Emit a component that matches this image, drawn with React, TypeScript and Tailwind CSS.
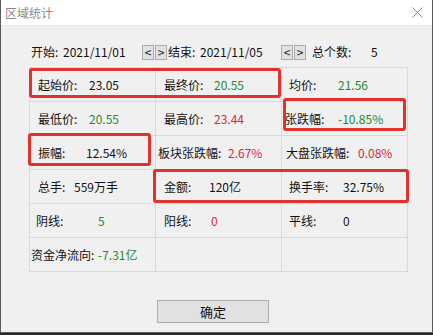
import React from "react";

type Cell = {
  label: string;
  value?: string;
  color?: string;
  pad: string;
  lw: string;
};

const GREEN = "text-[#24892f]";
const RED = "text-[#d9253c]";
const BLACK = "text-[#111]";

const rows: Cell[][] = [
  [
    { label: "起始价:", value: "23.05", color: BLACK, pad: "pl-[8px]", lw: "w-[51px]" },
    { label: "最终价:", value: "20.55", color: GREEN, pad: "pl-[8px]", lw: "w-[50px]" },
    { label: "均价:", value: "21.56", color: GREEN, pad: "pl-[7px]", lw: "w-[49px]" },
  ],
  [
    { label: "最低价:", value: "20.55", color: GREEN, pad: "pl-[8px]", lw: "w-[51px]" },
    { label: "最高价:", value: "23.44", color: RED, pad: "pl-[8px]", lw: "w-[50px]" },
    { label: "张跌幅:", value: "-10.85%", color: GREEN, pad: "pl-[3px]", lw: "w-[53px]" },
  ],
  [
    { label: "振幅:", value: "12.54%", color: BLACK, pad: "pl-[8px]", lw: "w-[48px]" },
    { label: "板块张跌幅:", value: "2.67%", color: RED, pad: "pl-[2px]", lw: "w-[70px]" },
    { label: "大盘张跌幅:", value: "0.08%", color: RED, pad: "pl-[4px]", lw: "w-[72px]" },
  ],
  [
    { label: "总手:", value: "559万手", color: BLACK, pad: "pl-[8px]", lw: "w-[36px]" },
    { label: "金额:", value: "120亿", color: BLACK, pad: "pl-[8px]", lw: "w-[45px]" },
    { label: "换手率:", value: "32.75%", color: BLACK, pad: "pl-[7px]", lw: "w-[54px]" },
  ],
  [
    { label: "阴线:", value: "5", color: GREEN, pad: "pl-[6px]", lw: "w-[62px]" },
    { label: "阳线:", value: "0", color: RED, pad: "pl-[8px]", lw: "w-[47px]" },
    { label: "平线:", value: "0", color: BLACK, pad: "pl-[7px]", lw: "w-[54px]" },
  ],
  [
    { label: "资金净流向:", value: "-7.31亿", color: GREEN, pad: "pl-[1px]", lw: "w-[67px]" },
    { label: "", pad: "", lw: "" },
    { label: "", pad: "", lw: "" },
  ],
];

function ArrowPair() {
  return (
    <div className="flex gap-[1px]">
      <button className="flex h-[15px] w-[12px] items-center justify-center border border-[#adadad] bg-[#e1e1e1] text-[12px] leading-none text-[#222]">
        &lt;
      </button>
      <button className="flex h-[15px] w-[12px] items-center justify-center border border-[#adadad] bg-[#e1e1e1] text-[12px] leading-none text-[#222]">
        &gt;
      </button>
    </div>
  );
}

export default function App() {
  return (
    <div
      className="h-[335px] w-[433px] bg-[#2a2a2a] text-[12px] text-[#111]"
      style={{ fontFamily: '"Noto Sans CJK SC", "Noto Sans", sans-serif' }}
    >
      <div className="flex h-[333px] w-[433px] flex-col border-x border-b border-[#5a5a5a] bg-[#f0f0f0]">
        {/* title bar */}
        <div className="flex h-[26px] items-center justify-between border-b border-[#e6e6e6] bg-white pl-[4px] pr-[9px]">
          <span className="text-[12px] text-[#8a8a8a]">区域统计</span>
          <svg width="11" height="11" viewBox="0 0 11 11" className="mb-[1px]">
            <path d="M0.5 0.5 L10.5 10.5 M10.5 0.5 L0.5 10.5" stroke="#8c8c8c" strokeWidth="1" />
          </svg>
        </div>

        {/* header */}
        <div className="mt-[18px] flex h-[16px] items-center pl-[30px] leading-none">
          <span className="w-[32px]">开始:</span>
          <span className="w-[79px]">2021/11/01</span>
          <ArrowPair />
          <span className="w-[33px] pl-[1px]">结束:</span>
          <span className="w-[81px]">2021/11/05</span>
          <ArrowPair />
          <span className="ml-[6px] w-[59px]">总个数:</span>
          <span>5</span>
        </div>

        {/* grid */}
        <div className="relative ml-[28px] mt-[7px] w-[379px]">
          <div className="grid grid-cols-3 border-l border-t border-[#d9d9d9]">
            {rows.flat().map((c, i) => (
              <div
                key={i}
                className={`flex h-[34px] items-center border-b border-r border-[#d9d9d9] leading-none ${c.pad}`}
              >
                <span className={c.lw}>{c.label}</span>
                {c.value && <span className={c.color}>{c.value}</span>}
              </div>
            ))}
          </div>

          {/* highlight boxes */}
          <div className="pointer-events-none absolute left-[0px] top-[1px] h-[30px] w-[252px] rounded-[3px] border-[3px] border-[#e0312c]" />
          <div className="pointer-events-none absolute left-[254px] top-[31px] h-[33px] w-[123px] rounded-[3px] border-[3px] border-[#e0312c]" />
          <div className="pointer-events-none absolute left-[-1px] top-[66px] h-[33px] w-[123px] rounded-[3px] border-[3px] border-[#e0312c]" />
          <div className="pointer-events-none absolute left-[124px] top-[102px] h-[34px] w-[256px] rounded-[3px] border-[3px] border-[#e0312c]" />
        </div>

        {/* footer */}
        <div className="mt-[28px] flex justify-center pr-[7px]">
          <button className="flex h-[23px] w-[112px] items-center justify-center border border-[#adadad] bg-[#e1e1e1] text-[13px] leading-none text-[#111]">
            确定
          </button>
        </div>
      </div>
    </div>
  );
}
